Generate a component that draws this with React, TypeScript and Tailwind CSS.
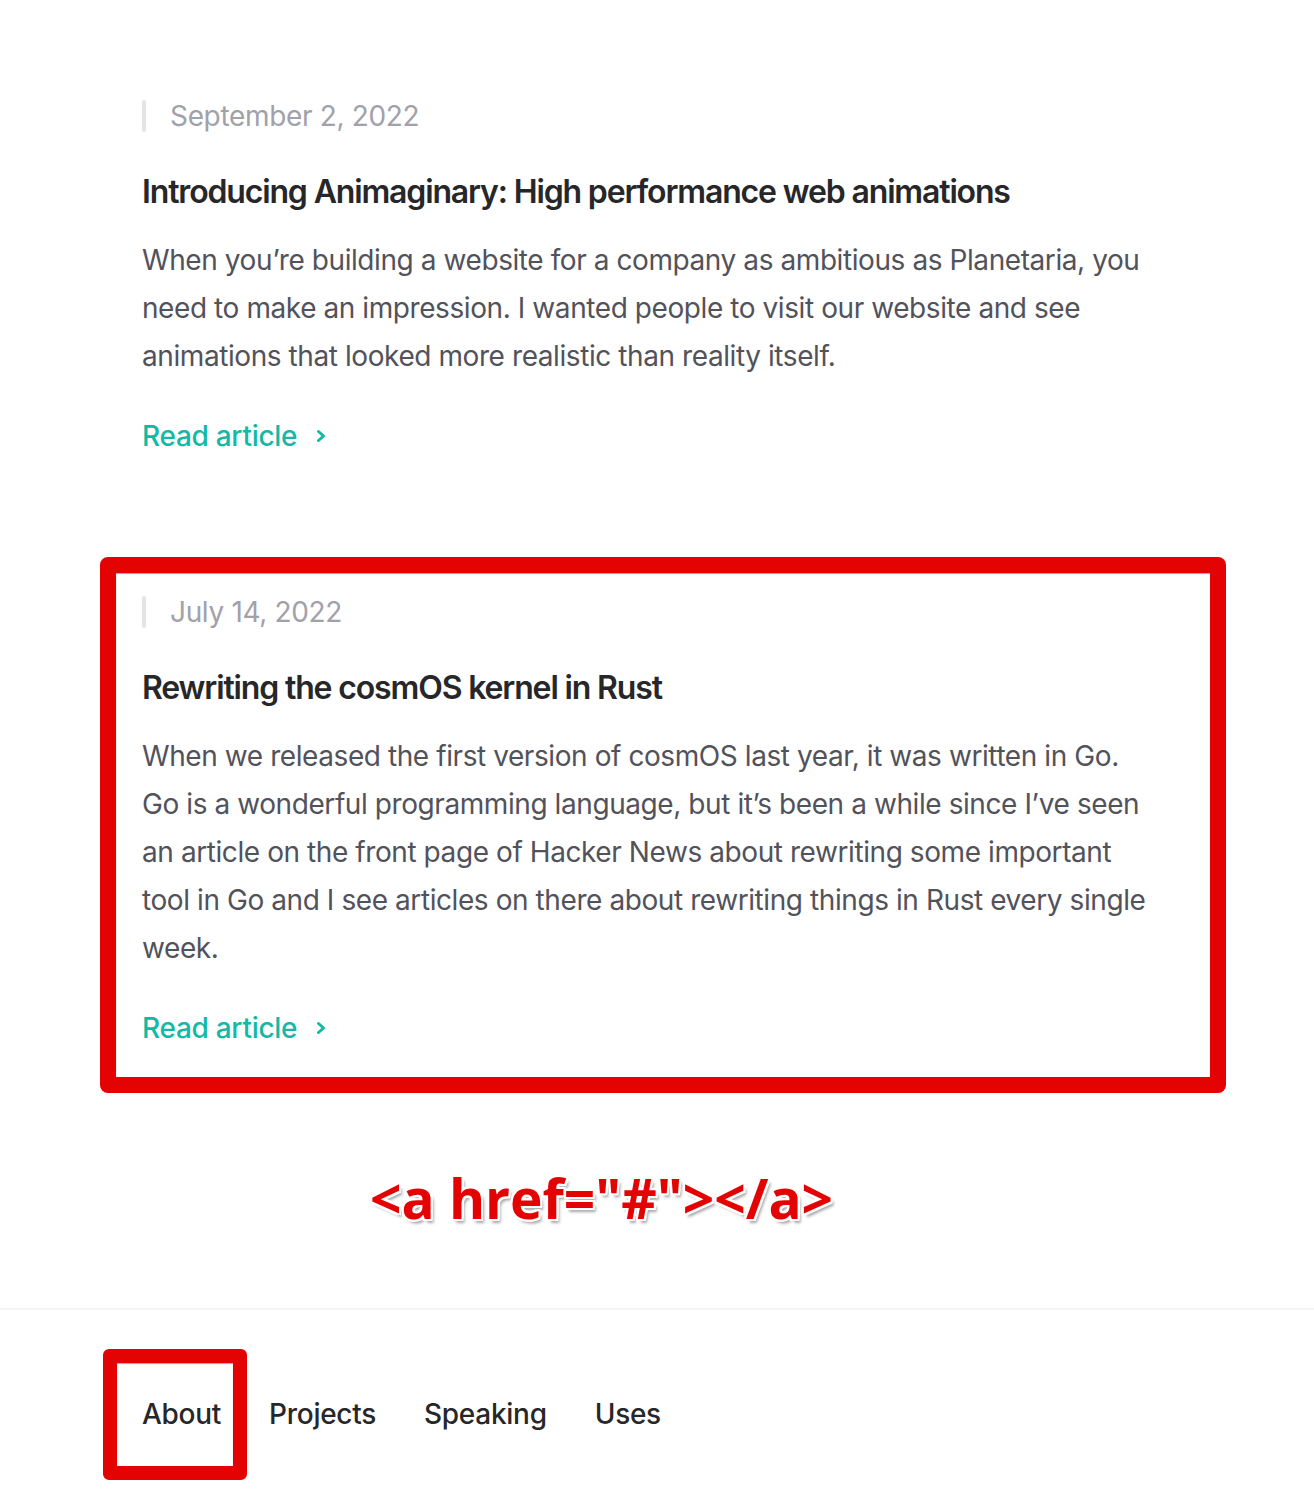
import React from 'react';

type Article = { date: string; title: string; body: string };

const articles: Article[] = [
  {
    date: 'September 2, 2022',
    title: 'Introducing Animaginary: High performance web animations',
    body: 'When you’re building a website for a company as ambitious as Planetaria, you need to make an impression. I wanted people to visit our website and see animations that looked more realistic than reality itself.',
  },
  {
    date: 'July 14, 2022',
    title: 'Rewriting the cosmOS kernel in Rust',
    body: 'When we released the first version of cosmOS last year, it was written in Go. Go is a wonderful programming language, but it’s been a while since I’ve seen an article on the front page of Hacker News about rewriting some important tool in Go and I see articles on there about rewriting things in Rust every single week.',
  },
];

function ChevronRight() {
  return (
    <svg viewBox="0 0 16 16" fill="none" aria-hidden="true" className="ml-2 h-8 w-8 stroke-current">
      <path d="M6.75 5.75 9.25 8l-2.5 2.25" strokeWidth="1.5" strokeLinecap="round" strokeLinejoin="round" />
    </svg>
  );
}

function ArticleCard({ a }: { a: Article }) {
  return (
    <article className="flex flex-col items-start">
      <time className="relative flex items-center pl-7 text-[28px] leading-[48px] tracking-[-0.012em] text-[#a1a1aa]">
        <span className="absolute inset-y-0 left-0 flex items-center">
          <span className="h-8 w-1 rounded-full bg-[#e4e4e7]" />
        </span>
        {a.date}
      </time>
      <h2 className="mt-6 text-[32px] leading-[56px] font-semibold tracking-[-0.036em] text-[#27272a]">
        {a.title}
      </h2>
      <p className="mt-4 max-w-[1016px] text-[28px] leading-[48px] tracking-[-0.015em] text-[#52525b]">{a.body}</p>
      <div className="mt-8 flex items-center text-[28px] leading-[48px] font-medium tracking-[-0.01em] text-[#14b8a6]">
        Read article
        <ChevronRight />
      </div>
    </article>
  );
}

const navLinks = ['About', 'Projects', 'Speaking', 'Uses'];

export default function App() {
  return (
    <div className="min-h-screen bg-white font-['Inter',sans-serif] antialiased">
      <main className="pl-[142px] pr-[142px] pt-[92px]">
        <div className="flex flex-col gap-32">
          <ArticleCard a={articles[0]} />
          <div className="relative">
            <ArticleCard a={articles[1]} />
            <div className="pointer-events-none absolute -top-[31px] -bottom-[41px] -left-[42px] -right-[54px] rounded-lg border-[16px] border-[#e30303] shadow-[inset_0_1px_1px_rgba(0,0,0,0.35)]" />
          </div>
        </div>
        <div className="flex h-[256px] items-start pt-[118px] pl-[228px]">
          <span className="font-['Open_Sans',sans-serif] text-[55px] leading-none font-bold text-[#e30303] [text-shadow:0_0_3px_#fff,2px_0_0_#fff,-2px_0_0_#fff,0_2px_0_#fff,0_-2px_0_#fff,2px_2px_0_#fff,-2px_-2px_0_#fff,2px_-2px_0_#fff,-2px_2px_0_#fff,3px_4px_3px_rgba(0,0,0,0.35)]">
            {'<a href="#"></a>'}
          </span>
        </div>
      </main>
      <footer className="border-t-2 border-[#f4f4f5]">
        <nav className="flex gap-x-12 px-[142px] pt-20 pb-32 text-[28px] leading-[48px] font-medium tracking-[-0.01em] text-[#27272a]">
          {navLinks.map((l, i) => (
            <a key={l} href="#" className="relative">
              {l}
              {i === 0 && (
                <span className="pointer-events-none absolute -top-[41px] -bottom-[42px] -left-[39px] -right-[26px] rounded-md border-[14px] border-[#e30303] shadow-[inset_0_1px_1px_rgba(0,0,0,0.35)]" />
              )}
            </a>
          ))}
        </nav>
      </footer>
    </div>
  );
}
